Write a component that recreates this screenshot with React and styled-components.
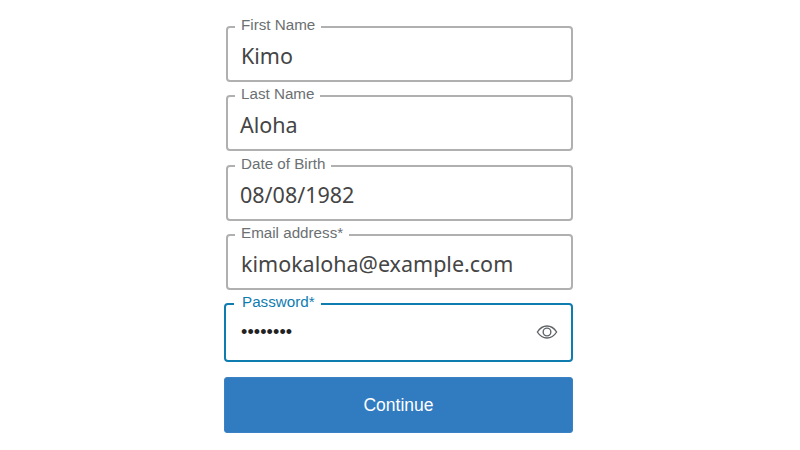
import React from "react";
import styled, { createGlobalStyle } from "styled-components";

const GlobalStyle = createGlobalStyle`
  html, body {
    margin: 0;
    padding: 0;
    background: #fff;
  }
`;

const fields = [
  { label: "First Name", value: "Kimo" },
  { label: "Last Name", value: "Aloha", shift: true },
  { label: "Date of Birth", value: "08/08/1982", shift: true },
  { label: "Email address*", value: "kimokaloha@example.com" },
];

export default function App() {
  return (
    <>
      <GlobalStyle />
      <Page>
        <Form>
          {fields.map((f) => (
            <Field key={f.label}>
              <Legend>{f.label}</Legend>
              <Value $shift={f.shift}>{f.value}</Value>
            </Field>
          ))}
          <Field $active>
            <Legend $active>Password*</Legend>
            <PasswordRow>
              <Dots>••••••••</Dots>
              <EyeIcon viewBox="0 0 24 24" fill="none" stroke="#5f6366" strokeWidth="1.5">
                <path d="M1.5 12C4.3 7.6 7.8 5.4 12 5.4s7.7 2.2 10.5 6.6c-2.8 4.4-6.3 6.6-10.5 6.6S4.3 16.4 1.5 12z" />
                <circle cx="12" cy="12" r="4.2" />
              </EyeIcon>
            </PasswordRow>
          </Field>
          <Button>Continue</Button>
        </Form>
      </Page>
    </>
  );
}

const Page = styled.div`
  width: 800px;
  height: 450px;
  overflow: hidden;
  background: #fff;
  padding: 17px 0 0 224px;
  box-sizing: border-box;
`;

const Form = styled.form`
  width: 349px;
  display: flex;
  flex-direction: column;
  align-items: flex-end;
`;

const Field = styled.fieldset`
  box-sizing: border-box;
  width: ${(p) => (p.$active ? "349px" : "347px")};
  height: ${(p) => (p.$active ? "67.5px" : "65px")};
  margin: 0 0 ${(p) => (p.$active ? "15px" : "4.3px")};
  padding: 0 14px;
  border: 2px solid ${(p) => (p.$active ? "#0f7cb0" : "#b0b0b0")};
  border-radius: 4px;
  min-inline-size: 0;
`;

const Legend = styled.legend`
  margin-left: ${(p) => (p.$active ? "-6px" : "-7px")};
  padding: 0 6px 4px ${(p) => (p.$active ? "8px" : "6px")};
  font-family: "Liberation Sans", Arial, sans-serif;
  font-size: 15.2px;
  line-height: 16px;
  color: ${(p) => (p.$active ? "#0f7cb0" : "#6b7072")};
`;

const Value = styled.div`
  margin-left: ${(p) => (p.$shift ? "-2px" : "-1px")};
  padding-top: 4px;
  font-family: "Noto Sans", sans-serif;
  font-size: 21.5px;
  line-height: 30px;
  color: #454545;
`;

const PasswordRow = styled.div`
  display: flex;
  align-items: center;
  justify-content: space-between;
  height: 36px;
  margin-right: -1px;
`;

const Dots = styled.span`
  margin-left: 1px;
  font-family: "Liberation Sans", Arial, sans-serif;
  font-size: 18px;
  letter-spacing: 0.1px;
  color: #222;
`;

const EyeIcon = styled.svg`
  width: 22px;
  height: 22px;
`;

const Button = styled.button`
  box-sizing: border-box;
  width: 349px;
  height: 56px;
  padding-top: 3px;
  border: 1px solid #3b82c4;
  border-radius: 3px;
  background: #317bc1;
  color: #fff;
  font-family: "Liberation Sans", Arial, sans-serif;
  font-size: 17.5px;
`;
